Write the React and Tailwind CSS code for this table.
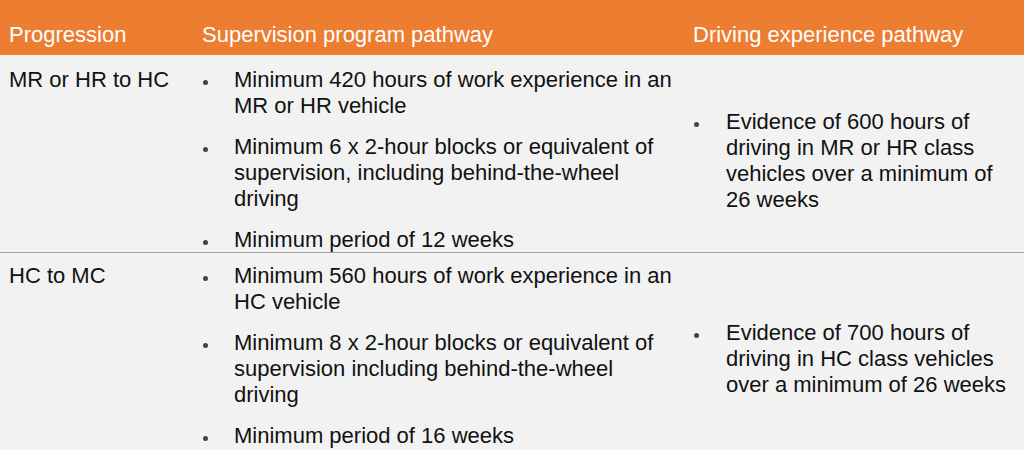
import React from "react";

const rows = [
  {
    progression: "MR or HR to HC",
    supervision: [
      "Minimum 420 hours of work experience in an MR or HR vehicle",
      "Minimum 6 x 2-hour blocks or equivalent of supervision, including behind-the-wheel driving",
      "Minimum period of 12 weeks",
    ],
    driving:
      "Evidence of 600 hours of driving in MR or HR class vehicles over a minimum of 26 weeks",
    top: "pt-[12px]",
    border: true,
  },
  {
    progression: "HC to MC",
    supervision: [
      "Minimum 560 hours of work experience in an HC vehicle",
      "Minimum 8 x 2-hour blocks or equivalent of supervision including behind-the-wheel driving",
      "Minimum period of 16 weeks",
    ],
    driving:
      "Evidence of 700 hours of driving in HC class vehicles over a minimum of 26 weeks",
    top: "pt-[10px]",
    border: false,
  },
];

function Bullet({ children, width }) {
  return (
    <div className="flex">
      <div className={`${width} shrink-0 flex pt-[13px]`}>
        <span className="w-[5px] h-[5px] rounded-full bg-[#3d4450]"></span>
      </div>
      <div className="flex-1">{children}</div>
    </div>
  );
}

function App() {
  return (
    <div
      className="w-[1024px] h-[450px] overflow-hidden bg-[#f2f2f2] text-[22px] leading-[26px] text-[#111111]"
      style={{ fontFamily: '"Liberation Sans", Arial, sans-serif' }}
    >
      <div className="h-[55px] bg-[#ed7d31] text-white grid grid-cols-[193px_491px_1fr] pt-[22px]">
        <div className="pl-[9px]">Progression</div>
        <div className="pl-[9px]">Supervision program pathway</div>
        <div className="pl-[9px]">Driving experience pathway</div>
      </div>

      {rows.map((row, i) => (
        <div
          key={i}
          className={`grid grid-cols-[193px_491px_1fr] ${
            row.border ? "h-[198px] border-b border-[#a3a3a3]" : "h-[197px]"
          }`}
        >
          <div className={`pl-[9px] ${row.top}`}>{row.progression}</div>
          <div className={`pl-[10px] pr-[9px] ${row.top} flex flex-col gap-[15px]`}>
            {row.supervision.map((s, j) => (
              <Bullet key={j} width="w-[31px]">
                {s}
              </Bullet>
            ))}
          </div>
          <div className="pl-[10px] pr-[10px] pt-[14px] flex items-center">
            <Bullet width="w-[32px]">{row.driving}</Bullet>
          </div>
        </div>
      ))}
    </div>
  );
}

export default App;
